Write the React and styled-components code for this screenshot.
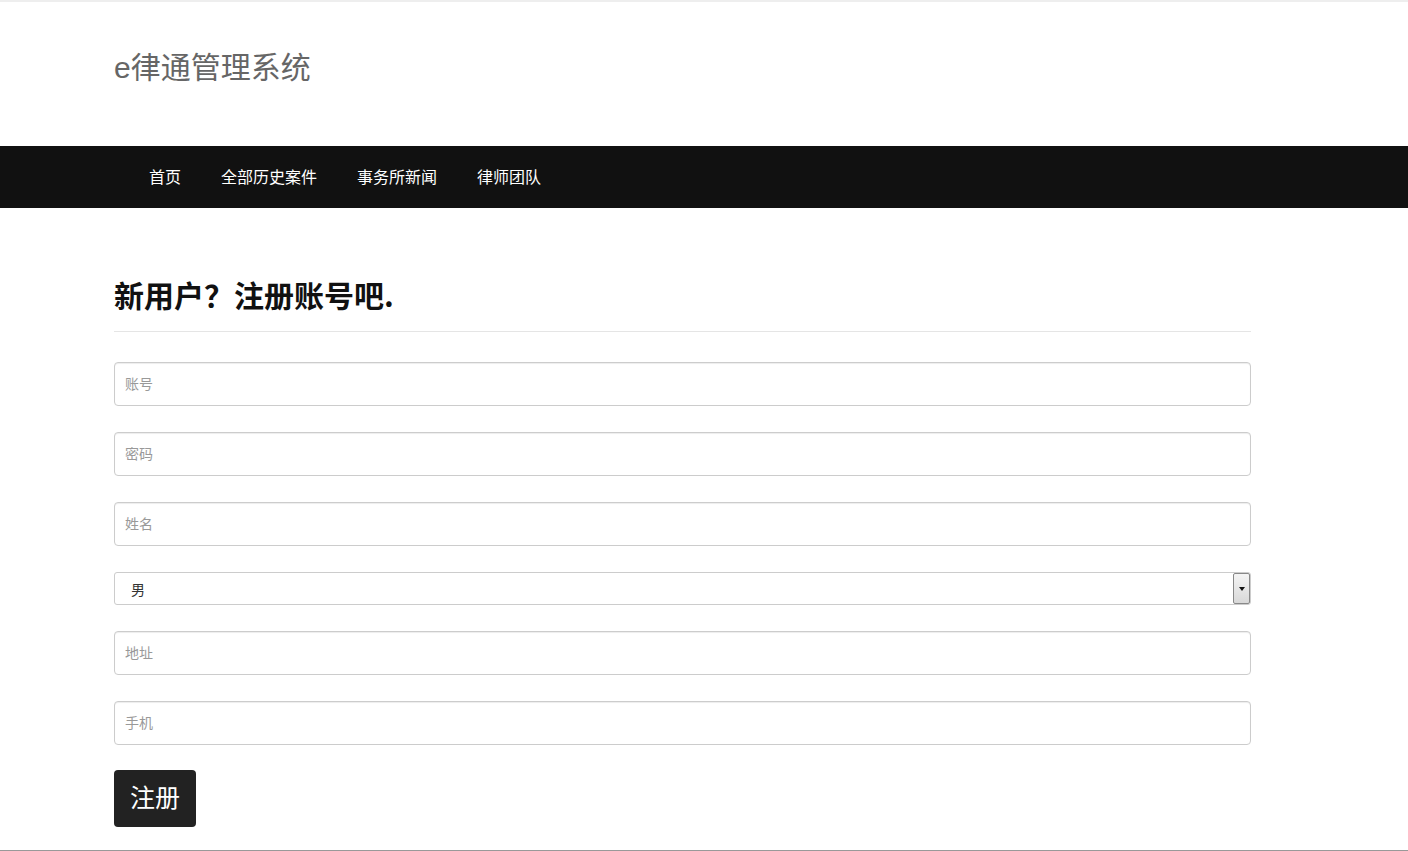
import React, { useState } from "react";
import styled, { createGlobalStyle } from "styled-components";

const GlobalStyle = createGlobalStyle`
  html, body {
    margin: 0;
    padding: 0;
    background: #fff;
    font-family: "Liberation Sans", "Noto Sans CJK SC", sans-serif;
  }
  * {
    box-sizing: border-box;
  }
`;

const Page = styled.div`
  border-top: 2px solid #eee;
  height: 851px;
  display: flex;
  flex-direction: column;
  overflow: hidden;
`;

const Header = styled.header`
  height: 144px;
  flex-shrink: 0;
  display: flex;
  align-items: center;
  padding-left: 114px;
`;

const Brand = styled.a`
  font-family: "Liberation Sans", "Noto Sans CJK SC", sans-serif;
  font-size: 30px;
  color: #666;
  text-decoration: none;
  margin-top: -18px;
`;

const NavBar = styled.nav`
  background: #111;
  height: 62px;
  flex-shrink: 0;
  display: flex;
  align-items: center;
  padding-left: 129px;
  padding-bottom: 3px;
`;

const NavItem = styled.a`
  font-family: "Noto Sans CJK SC", sans-serif;
  font-size: 16px;
  color: #fff;
  padding: 0 20px;
  text-decoration: none;
  cursor: pointer;
`;

const Main = styled.main`
  width: 1137px;
  margin-left: 114px;
  padding-top: 63px;
  flex: 1;
`;

const Title = styled.h2`
  margin: 0;
  font-family: "Noto Sans CJK SC", sans-serif;
  font-size: 30px;
  font-weight: 700;
  color: #111;
  line-height: 46px;
`;

const Rule = styled.hr`
  border: none;
  border-top: 1px solid #e5e5e5;
  margin: 14px 0 30px;
`;

const Form = styled.form`
  display: flex;
  flex-direction: column;
  gap: 26px;
`;

const Input = styled.input`
  width: 100%;
  height: 44px;
  padding: 0 10px 2px;
  border: 1px solid #ccc;
  border-radius: 4px;
  box-shadow: inset 0 1px 1px rgba(0, 0, 0, 0.075);
  font-family: "Noto Sans CJK SC", sans-serif;
  font-size: 14px;
  color: #333;
  outline: none;

  &::placeholder {
    color: #999;
  }
`;

const SelectWrap = styled.div`
  position: relative;
  height: 33px;
`;

const Select = styled.select`
  appearance: none;
  width: 100%;
  height: 100%;
  padding: 0 16px;
  border: 1px solid #ccc;
  border-radius: 3px;
  background: #fff;
  font-family: "Noto Sans CJK SC", sans-serif;
  font-size: 14px;
  color: #333;
  outline: none;
`;

const Arrow = styled.span`
  position: absolute;
  top: 1px;
  right: 1px;
  bottom: 1px;
  width: 17px;
  border: 1px solid #888;
  border-radius: 2px;
  background: linear-gradient(#f4f4f4, #d8d8d8);
  display: flex;
  align-items: center;
  justify-content: center;
  pointer-events: none;

  &::after {
    content: "";
    border-left: 3px solid transparent;
    border-right: 3px solid transparent;
    border-top: 4px solid #111;
  }
`;

const Submit = styled.button`
  align-self: flex-start;
  width: 82px;
  height: 57px;
  margin-top: -1px;
  padding: 0 0 5px;
  background: #222;
  color: #fff;
  border: none;
  border-radius: 4px;
  font-family: "Noto Sans CJK SC", sans-serif;
  font-size: 25px;
  cursor: pointer;
`;

const Footer = styled.footer`
  height: 1px;
  flex-shrink: 0;
  background: #999;
`;

const navLinks = ["首页", "全部历史案件", "事务所新闻", "律师团队"];

const App = () => {
  const [gender, setGender] = useState("男");

  return (
    <>
      <GlobalStyle />
      <Page>
        <Header>
          <Brand>e律通管理系统</Brand>
        </Header>
        <NavBar>
          {navLinks.map((link) => (
            <NavItem key={link}>{link}</NavItem>
          ))}
        </NavBar>
        <Main>
          <Title>新用户？注册账号吧.</Title>
          <Rule />
          <Form onSubmit={(e) => e.preventDefault()}>
            <Input placeholder="账号" />
            <Input placeholder="密码" type="password" />
            <Input placeholder="姓名" />
            <SelectWrap>
              <Select value={gender} onChange={(e) => setGender(e.target.value)}>
                <option>男</option>
                <option>女</option>
              </Select>
              <Arrow />
            </SelectWrap>
            <Input placeholder="地址" />
            <Input placeholder="手机" />
            <Submit type="submit">注册</Submit>
          </Form>
        </Main>
        <Footer />
      </Page>
    </>
  );
};

export default App;
